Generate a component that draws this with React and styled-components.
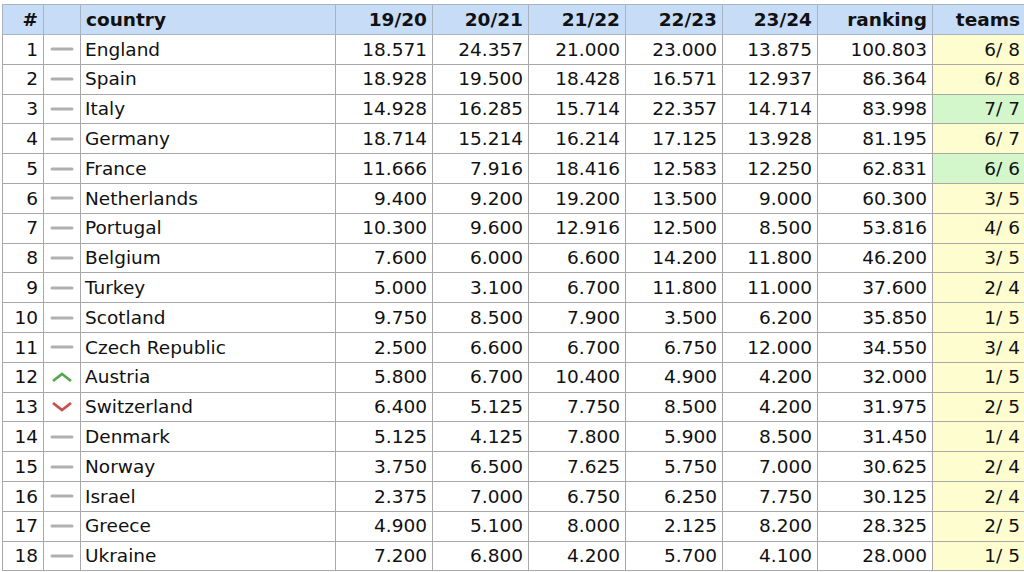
import React from "react";
import styled, { createGlobalStyle } from "styled-components";

const Global = createGlobalStyle`
  html, body {
    margin: 0;
    padding: 0;
    background: #fff;
    overflow: hidden;
  }
`;

const Page = styled.div`
  width: 1024px;
  height: 572px;
  overflow: hidden;
  padding: 4px 0 0 2px;
  box-sizing: border-box;
`;

const Table = styled.table`
  border-collapse: collapse;
  table-layout: fixed;
  width: 1023px;
  font-family: "DejaVu Sans", Verdana, sans-serif;
  font-size: 18.5px;
  color: #111;
`;

const Th = styled.th`
  background: #c7dcf6;
  border: 1px solid #a9b4c2;
  height: 27px;
  padding: 2px 5px 0 5px;
  font-weight: bold;
  text-align: ${(p) => (p.$left ? "left" : "right")};
  white-space: nowrap;
  line-height: 1;
`;

const Td = styled.td`
  border: 1px solid #a8a8a8;
  height: 27.8px;
  padding: 1px 5px 0 5px;
  text-align: ${(p) => (p.$left ? "left" : "right")};
  background: ${(p) => p.$bg || "#fff"};
  white-space: nowrap;
  line-height: 1;
`;

const CountryCell = styled(Td)`
  padding-left: 4px;
`;

const IconCell = styled.td`
  border: 1px solid #a8a8a8;
  padding: 0;
  text-align: center;
  vertical-align: middle;
`;

const Trend = styled.svg`
  display: block;
  margin: 0 auto;
  width: 24px;
  height: 12px;
`;

const TrendIcon = ({ dir }) => {
  if (dir === "up")
    return (
      <Trend viewBox="0 0 24 12">
        <path d="M3 10 L12 3 L21 10" fill="none" stroke="#5aa552" strokeWidth="2.8" />
      </Trend>
    );
  if (dir === "down")
    return (
      <Trend viewBox="0 0 24 12">
        <path d="M3 2 L12 9 L21 2" fill="none" stroke="#c8504a" strokeWidth="2.8" />
      </Trend>
    );
  return (
    <Trend viewBox="0 0 24 12">
      <line x1="2" y1="6" x2="22" y2="6" stroke="#b0b0b0" strokeWidth="3" strokeLinecap="round" />
    </Trend>
  );
};

const YELLOW = "#fdfdcf";
const GREEN = "#d3f6cb";

const rows = [
  ["England", "18.571", "24.357", "21.000", "23.000", "13.875", "100.803", "6/ 8", "y"],
  ["Spain", "18.928", "19.500", "18.428", "16.571", "12.937", "86.364", "6/ 8", "y"],
  ["Italy", "14.928", "16.285", "15.714", "22.357", "14.714", "83.998", "7/ 7", "g"],
  ["Germany", "18.714", "15.214", "16.214", "17.125", "13.928", "81.195", "6/ 7", "y"],
  ["France", "11.666", "7.916", "18.416", "12.583", "12.250", "62.831", "6/ 6", "g"],
  ["Netherlands", "9.400", "9.200", "19.200", "13.500", "9.000", "60.300", "3/ 5", "y"],
  ["Portugal", "10.300", "9.600", "12.916", "12.500", "8.500", "53.816", "4/ 6", "y"],
  ["Belgium", "7.600", "6.000", "6.600", "14.200", "11.800", "46.200", "3/ 5", "y"],
  ["Turkey", "5.000", "3.100", "6.700", "11.800", "11.000", "37.600", "2/ 4", "y"],
  ["Scotland", "9.750", "8.500", "7.900", "3.500", "6.200", "35.850", "1/ 5", "y"],
  ["Czech Republic", "2.500", "6.600", "6.700", "6.750", "12.000", "34.550", "3/ 4", "y"],
  ["Austria", "5.800", "6.700", "10.400", "4.900", "4.200", "32.000", "1/ 5", "y", "up"],
  ["Switzerland", "6.400", "5.125", "7.750", "8.500", "4.200", "31.975", "2/ 5", "y", "down"],
  ["Denmark", "5.125", "4.125", "7.800", "5.900", "8.500", "31.450", "1/ 4", "y"],
  ["Norway", "3.750", "6.500", "7.625", "5.750", "7.000", "30.625", "2/ 4", "y"],
  ["Israel", "2.375", "7.000", "6.750", "6.250", "7.750", "30.125", "2/ 4", "y"],
  ["Greece", "4.900", "5.100", "8.000", "2.125", "8.200", "28.325", "2/ 5", "y"],
  ["Ukraine", "7.200", "6.800", "4.200", "5.700", "4.100", "28.000", "1/ 5", "y"],
];

const widths = [41, 37, 255, 97, 96, 97, 97, 95, 115, 93];

export default function App() {
  return (
    <Page>
      <Global />
      <Table>
        <colgroup>
          {widths.map((w, i) => (
            <col key={i} style={{ width: w }} />
          ))}
        </colgroup>
        <thead>
          <tr>
            <Th>#</Th>
            <Th />
            <Th $left>country</Th>
            <Th>19/20</Th>
            <Th>20/21</Th>
            <Th>21/22</Th>
            <Th>22/23</Th>
            <Th>23/24</Th>
            <Th>ranking</Th>
            <Th>teams</Th>
          </tr>
        </thead>
        <tbody>
          {rows.map((r, i) => (
            <tr key={r[0]}>
              <Td>{i + 1}</Td>
              <IconCell>
                <TrendIcon dir={r[9]} />
              </IconCell>
              <CountryCell $left>{r[0]}</CountryCell>
              <Td>{r[1]}</Td>
              <Td>{r[2]}</Td>
              <Td>{r[3]}</Td>
              <Td>{r[4]}</Td>
              <Td>{r[5]}</Td>
              <Td>{r[6]}</Td>
              <Td $bg={r[8] === "g" ? GREEN : YELLOW}>{r[7]}</Td>
            </tr>
          ))}
        </tbody>
      </Table>
    </Page>
  );
}
